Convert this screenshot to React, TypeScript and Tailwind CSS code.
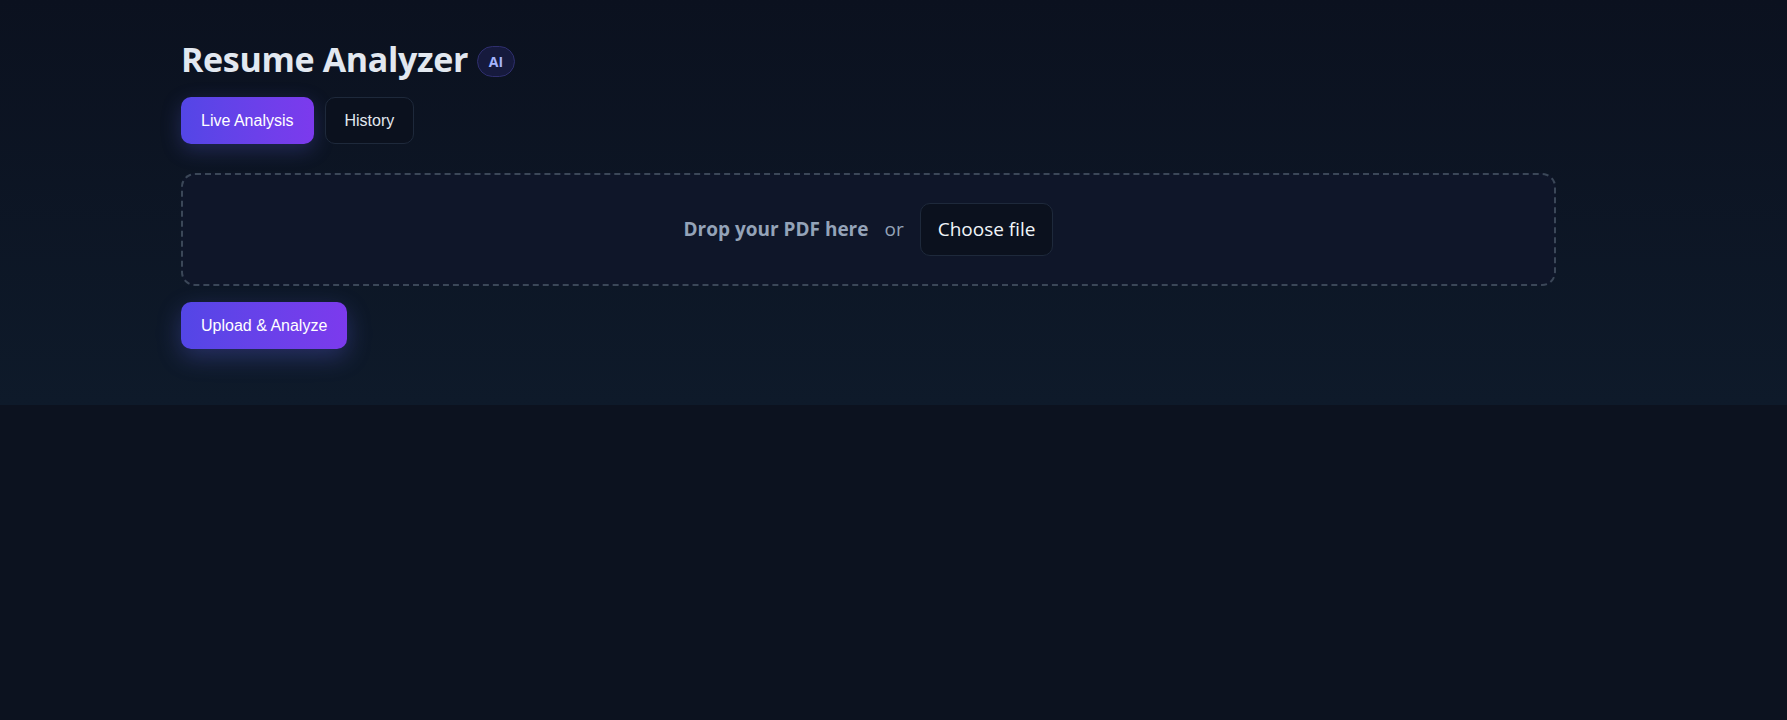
import React, { useState } from "react";

const ui = { fontFamily: '"Open Sans", "Noto Sans", sans-serif' };
const btn = { fontFamily: '"Liberation Sans", Arial, sans-serif' };

const active =
  "h-[47px] rounded-[10px] bg-gradient-to-r from-[#5346e6] to-[#7c3aed] px-[20px] text-[16px] text-white shadow-[0_6px_20px_rgba(99,102,241,0.25)]";
const idle =
  "h-[47px] rounded-[10px] border border-[#1e293b] bg-[#0b111e] px-[19px] text-[16px] text-[#e2e8f0]";

export default function App() {
  const [tab, setTab] = useState<"live" | "history">("live");

  return (
    <div className="min-h-screen bg-[#0c121f]" style={ui}>
      <section className="bg-gradient-to-b from-[#0b111f] to-[#0e1a2a] pb-[56px] pt-[38px]">
        <div className="ml-[181px] w-[1375px]">
          <div className="flex items-center gap-[9px]">
            <h1 className="text-[34px] font-bold leading-[42px] text-[#e2e8f0] tracking-[-0.35px]">
              Resume Analyzer
            </h1>
            <span className="mt-[4px] flex h-[31px] w-[38px] items-center justify-center rounded-full border border-[#2f2f6e] bg-[#161a3d] text-[14px] font-bold text-[#a5b4fc]">
              AI
            </span>
          </div>

          <div className="mt-[17px] flex gap-[11px]" style={btn}>
            <button onClick={() => setTab("live")} className={tab === "live" ? active : idle}>
              Live Analysis
            </button>
            <button onClick={() => setTab("history")} className={tab === "history" ? active : idle}>
              History
            </button>
          </div>

          <div className="mt-[29px] flex h-[113px] items-center justify-center gap-[16px] rounded-[14px] border-2 border-dashed border-[#3b4758] bg-[#0f1629]">
            <span className="text-[19px] font-bold text-[#94a3b8]">Drop your PDF here</span>
            <span className="text-[19px] text-[#94a3b8]">or</span>
            <button className="h-[53px] rounded-[10px] border border-[#1e293b] bg-[#0b111e] px-[17px] text-[19px] text-[#f1f5f9]">
              Choose file
            </button>
          </div>

          <button
            className="mt-[16px] h-[47px] rounded-[10px] bg-gradient-to-r from-[#5346e6] to-[#7c3aed] px-[20px] text-[16px] text-white shadow-[0_8px_24px_rgba(99,102,241,0.3)]"
            style={btn}
          >
            Upload &amp; Analyze
          </button>
        </div>
      </section>
    </div>
  );
}
